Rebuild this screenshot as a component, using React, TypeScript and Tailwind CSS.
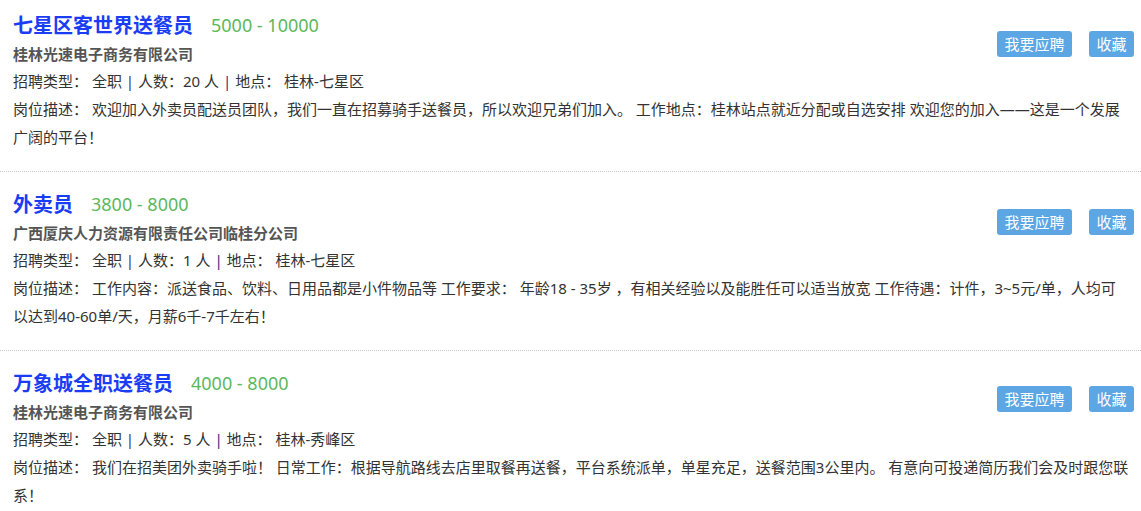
import React from "react";

type Job = {
  title: string;
  salary: string;
  company: string;
  count: string;
  place: string;
  desc: string;
};

const jobs: Job[] = [
  {
    title: "七星区客世界送餐员",
    salary: "5000 - 10000",
    company: "桂林光速电子商务有限公司",
    count: "20",
    place: "桂林-七星区",
    desc: "欢迎加入外卖员配送员团队，我们一直在招募骑手送餐员，所以欢迎兄弟们加入。 工作地点：桂林站点就近分配或自选安排 欢迎您的加入——这是一个发展广阔的平台！",
  },
  {
    title: "外卖员",
    salary: "3800 - 8000",
    company: "广西厦庆人力资源有限责任公司临桂分公司",
    count: "1",
    place: "桂林-七星区",
    desc: "工作内容：派送食品、饮料、日用品都是小件物品等 工作要求： 年龄18 - 35岁 ，有相关经验以及能胜任可以适当放宽 工作待遇：计件，3~5元/单，人均可以达到40-60单/天，月薪6千-7千左右！",
  },
  {
    title: "万象城全职送餐员",
    salary: "4000 - 8000",
    company: "桂林光速电子商务有限公司",
    count: "5",
    place: "桂林-秀峰区",
    desc: "我们在招美团外卖骑手啦！ 日常工作：根据导航路线去店里取餐再送餐，平台系统派单，单星充足，送餐范围3公里内。 有意向可投递简历我们会及时跟您联系！",
  },
];

function JobItem({ job, first, last }: { job: Job; first: boolean; last: boolean }) {
  return (
    <div
      className={`pl-[13px] ${first ? "pt-[10px]" : "pt-[17px]"} ${
        last ? "" : "pb-[20px] border-b border-dotted border-[#c8c8c8]"
      }`}
    >
      <div className="flex items-center h-[31px]">
        <span className="text-[20px] font-bold text-[#1a3cf5] leading-[31px]">{job.title}</span>
        <span className="ml-[18px] text-[18px] text-[#5cb85c] leading-[31px]">{job.salary}</span>
      </div>
      <div className="text-[15px] font-bold text-[#555555] leading-[27px]">{job.company}</div>
      <div className="text-[15px] text-[#333333] leading-[27px]">
        招聘类型： 全职 <span className="text-[#3d2d78]">|</span> 人数：{job.count} 人{" "}
        <span className="text-[#3d2d78]">|</span> 地点： {job.place}
      </div>
      <div className="text-[15px] text-[#333333] leading-[28px] w-[1116px]">{`岗位描述： ${job.desc}`}</div>
    </div>
  );
}

function Buttons() {
  return (
    <div className="flex gap-[17px]">
      <button className="h-[26px] w-[75px] rounded-[3px] bg-[#5ba6e3] text-white text-[15px] leading-[26px]">
        我要应聘
      </button>
      <button className="h-[26px] w-[45px] rounded-[3px] bg-[#5ba6e3] text-white text-[15px] leading-[26px]">
        收藏
      </button>
    </div>
  );
}

export default function App() {
  return (
    <div
      className="w-[1141px] h-[511px] overflow-hidden bg-white"
      style={{ fontFamily: '"Noto Sans", "Noto Sans CJK SC", sans-serif' }}
    >
      {jobs.map((job, i) => (
        <div key={i} className="relative">
          <JobItem job={job} first={i === 0} last={i === jobs.length - 1} />
          <div className={`absolute right-[7px] ${i === 0 ? "top-[31px]" : i === 1 ? "top-[37px]" : "top-[35px]"}`}>
            <Buttons />
          </div>
        </div>
      ))}
    </div>
  );
}
